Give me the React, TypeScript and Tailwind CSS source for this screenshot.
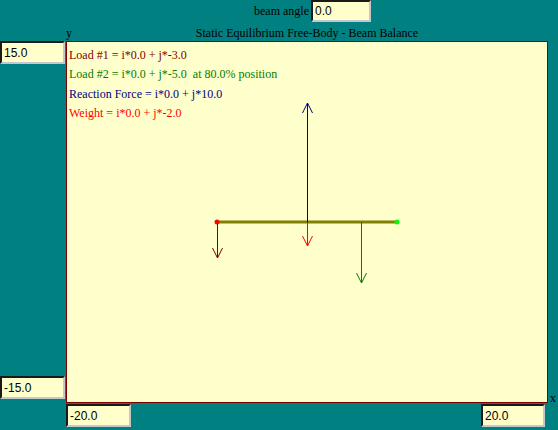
import React from 'react';

const inputCls =
  "h-[23px] bg-[#ffffcc] border-2 border-t-[#1a1a1a] border-l-[#1a1a1a] border-r-[#c4c8cc] border-b-[#c4c8cc] pl-[2px] font-['Liberation_Sans'] text-[12px] text-black outline-none";

function Field({ value, className }: { value: string; className: string }) {
  return <input readOnly value={value} className={`${inputCls} ${className}`} />;
}

export default function App() {
  return (
    <div className="w-[558px] h-[430px] bg-[#008080] flex flex-col font-['Liberation_Serif',serif] text-[12px] text-black overflow-hidden">
      {/* angle control */}
      <div className="h-[22px] flex items-center pl-[254px] gap-[2px]">
        <span>beam angle</span>
        <Field value="0.0" className="w-[60px] !h-[22px]" />
      </div>

      {/* title */}
      <div className="h-[19px] ml-[66px] w-[482px] grid items-end leading-[16px]">
        <span className="col-start-1 row-start-1 justify-self-start">y</span>
        <span className="col-start-1 row-start-1 justify-self-center">
          Static Equilibrium Free-Body - Beam Balance
        </span>
      </div>

      {/* main area */}
      <div className="flex h-[362px]">
        <div className="w-[66px] flex flex-col justify-between pb-[4px]">
          <Field value="15.0" className="w-[65px]" />
          <Field value="-15.0" className="w-[65px]" />
        </div>
        <div className="w-[482px] h-[362px] border border-[#800000] bg-[#ffffcc] relative">
          <div className="pl-[2px] pt-[4px] leading-[19.3px] flex flex-col">
            <span className="text-[#800000]">Load #1 = i*0.0 + j*-3.0</span>
            <span className="text-[#008000]">Load #2 = i*0.0 + j*-5.0&nbsp; at 80.0% position</span>
            <span className="text-[#000080]">Reaction Force = i*0.0 + j*10.0</span>
            <span className="text-[#ff0000]">Weight = i*0.0 + j*-2.0</span>
          </div>
          <svg className="absolute inset-0" width="480" height="360" fill="none">
            <line x1="150" y1="180" x2="330" y2="180" stroke="#808000" strokeWidth="3" />
            {/* reaction */}
            <g stroke="#000080">
              <line x1="240.5" y1="180" x2="240.5" y2="61" />
              <polyline points="235.5,71 240.5,61 245.5,71" />
            </g>
            {/* load 1 */}
            <g stroke="#800000">
              <line x1="150.5" y1="180" x2="150.5" y2="216" />
              <polyline points="145.5,206 150.5,216 155.5,206" />
            </g>
            {/* weight */}
            <g stroke="#ff0000">
              <line x1="240.5" y1="180" x2="240.5" y2="204" />
              <polyline points="235.5,194 240.5,204 245.5,194" />
            </g>
            {/* load 2 */}
            <g stroke="#008000">
              <line x1="294.5" y1="180" x2="294.5" y2="241" />
              <polyline points="289.5,231 294.5,241 299.5,231" />
            </g>
            <circle cx="150" cy="180" r="2.5" fill="#ff0000" />
            <circle cx="330" cy="180" r="2.5" fill="#00ff00" />
          </svg>
        </div>
        <span className="self-end ml-[2px] leading-[14px] mb-[-2px]">x</span>
      </div>

      {/* x range */}
      <div className="flex pt-[1px]">
        <Field value="-20.0" className="ml-[66px] w-[65px]" />
        <Field value="20.0" className="ml-[350px] w-[64px]" />
      </div>
    </div>
  );
}
